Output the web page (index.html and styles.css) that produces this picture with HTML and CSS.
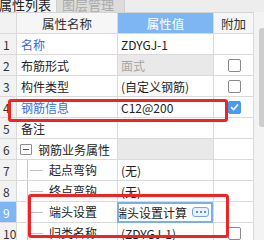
FILE: index.html
```html
<!DOCTYPE html>
<html>
  <head>
    <title>属性列表</title>
    <link rel="stylesheet" href="styles.css">
  </head>
  <body>
    <div class="tabs">
      <div class="tab active"><span>属性列表</span></div>
      <div class="tab"><span>图层管理</span></div>
    </div>
    <div class="panel">
      <div class="grid">
        <div class="c num hd"></div>
        <div class="c hd center">属性名称</div>
        <div class="c hd center sel">属性值</div>
        <div class="c hd center">附加</div>

        <div class="c num">1</div>
        <div class="c name link">名称</div>
        <div class="c val">ZDYGJ-1</div>
        <div class="c add"></div>

        <div class="c num">2</div>
        <div class="c name">布筋形式</div>
        <div class="c val dim">面式</div>
        <div class="c add"><i class="box"></i></div>

        <div class="c num">3</div>
        <div class="c name">构件类型</div>
        <div class="c val">(自定义钢筋)</div>
        <div class="c add"><i class="box"></i></div>

        <div class="c num">4</div>
        <div class="c name link">钢筋信息</div>
        <div class="c val">C12@200</div>
        <div class="c add"><i class="box on"><svg width="9" height="8" viewBox="0 0 9 8"><path d="M1 4.2 L3.6 6.6 L8 1.4" fill="none" stroke="#fff" stroke-width="1.6"/></svg></i></div>

        <div class="c num">5</div>
        <div class="c name">备注</div>
        <div class="c val"></div>
        <div class="c add"></div>

        <div class="c num">6</div>
        <div class="c name group"><i class="fold"></i>钢筋业务属性</div>
        <div class="c val dim"></div>
        <div class="c add"></div>

        <div class="c num">7</div>
        <div class="c name child"><i class="tree"></i>起点弯钩</div>
        <div class="c val">(无)</div>
        <div class="c add"></div>

        <div class="c num">8</div>
        <div class="c name child"><i class="tree"></i>终点弯钩</div>
        <div class="c val">(无)</div>
        <div class="c add"></div>

        <div class="c num cur">9</div>
        <div class="c name child"><i class="tree"></i>端头设置</div>
        <div class="c val edit">
          <span class="field"><span class="txt">端头设置计算</span></span>
          <span class="more"><svg width="12" height="4" viewBox="0 0 12 4"><circle cx="2" cy="2" r="1" fill="#3c6fb0"/><circle cx="6" cy="2" r="1" fill="#3c6fb0"/><circle cx="10" cy="2" r="1" fill="#3c6fb0"/></svg></span>
        </div>
        <div class="c add"></div>

        <div class="c num">10</div>
        <div class="c name child"><i class="tree"></i>归类名称</div>
        <div class="c val">(ZDYGJ-1)</div>
        <div class="c add"><i class="box"></i></div>
      </div>
      <div class="scroll"><div class="thumb"></div></div>
    </div>
    <div class="mark mark-a"></div>
    <div class="mark mark-b"></div>
  </body>
</html>
```

FILE: styles.css
```css
body{
  margin: 0;
  padding: 0;
  width: 264px;
  height: 240px;
  overflow: hidden;
  background: #fff;
  color: #222;
  font-family: "Noto Sans CJK SC", "Liberation Sans", sans-serif;
  font-size: 12px;
}
.tabs{
  display: flex;
  height: 12px;
  background: #ededed;
  overflow: hidden;
}
.tab{
  width: 67px;
  font-size: 13px;
  color: #aaa;
  background: #dcdcdc;
  border-right: 1px solid #cfcfcf;
}
.tab span{
  display: block;
  margin-top: -3px;
  line-height: 16px;
  padding-left: 5px;
}
.tab.active{
  width: 56px;
  color: #222;
  background: #f5f5f5;
}
.tab.active span{
  padding-left: 0;
  margin-left: -1px;
}
.panel{
  display: flex;
}
.grid{
  display: grid;
  grid-template-columns: 17px 101px 96px 40px;
  grid-auto-rows: 21px;
  border-top: 1px solid #d4d4d4;
}
.c{
  box-sizing: border-box;
  display: flex;
  align-items: center;
  border-right: 1px solid #dadada;
  border-bottom: 1px solid #dadada;
  white-space: nowrap;
  overflow: hidden;
}
.hd{
  background: #f6f6f6;
  font-size: 12.5px;
  color: #333;
}
.center{
  justify-content: center;
}
.hd.sel{
  background: #7db6f3;
  color: #fff;
}
.num{
  background: #f2f2f2;
  padding-left: 3px;
  color: #333;
}
.num.cur{
  background: #7db6f3;
  color: #fff;
}
.name{
  padding-left: 4px;
}
.link{
  color: #2f6de3;
}
.val{
  padding-left: 3px;
}
.val.dim{
  background: #e9e9e9;
  color: #a5a5a5;
}
.add{
  justify-content: center;
  padding-left: 1px;
}
.box{
  box-sizing: border-box;
  width: 13px;
  height: 13px;
  border: 1px solid #8a8a8a;
  border-radius: 2px;
  background: #fff;
}
.box.on{
  display: flex;
  align-items: center;
  justify-content: center;
  border-color: #4795ee;
  background: #4b9bf0;
}
.group{
  padding-left: 3px;
}
.fold{
  box-sizing: border-box;
  width: 12px;
  height: 11px;
  margin-right: 6px;
  border: 1px solid #8c8c8c;
  border-radius: 1px;
  background: linear-gradient(#555, #555) center / 6px 1px no-repeat;
}
.child{
  padding-left: 10px;
  align-items: stretch;
  line-height: 20px;
}
.child .tree{
  width: 15px;
  margin-right: 6px;
  border-left: 1px solid #c8c8c8;
  background: linear-gradient(#c0c0c0, #c0c0c0) 2px center / 13px 1px no-repeat;
}
.val.edit{
  padding: 0;
  position: relative;
  overflow: visible;
}
.field{
  box-sizing: border-box;
  display: flex;
  align-items: center;
  width: 96px;
  height: 21px;
  margin-left: -1px;
  padding-right: 20px;
  border: 2px solid #79afec;
  overflow: hidden;
  background: #fff;
}
.field .txt{
  margin-left: -4px;
}
.more{
  position: absolute;
  right: 4px;
  top: 5px;
  box-sizing: border-box;
  width: 17px;
  height: 10px;
  display: flex;
  align-items: center;
  justify-content: center;
  border: 1px solid #6fa6e8;
  border-radius: 3px;
  background: #e9f2fc;
}
.scroll{
  flex: 1;
  height: 228px;
  background: #f3f3f3;
  padding-left: 5px;
  padding-top: 16px;
}
.thumb{
  width: 6px;
  height: 99px;
  background: #cdcdcd;
  border-radius: 3px 0 0 3px;
}
.mark{
  position: absolute;
  box-sizing: border-box;
  border: 3px solid #f42323;
  border-radius: 3px;
}
.mark-a{
  left: 8px;
  top: 99px;
  width: 220px;
  height: 23px;
}
.mark-b{
  left: 28px;
  top: 194px;
  width: 201px;
  height: 44px;
}
```
